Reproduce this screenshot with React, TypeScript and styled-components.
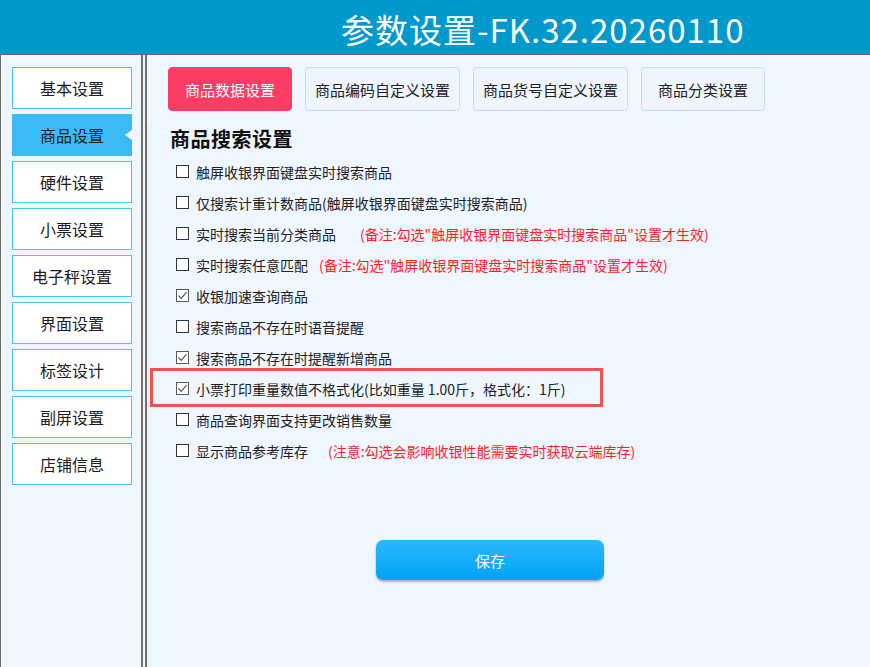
import React, { FC } from "react";
import styled, { createGlobalStyle, css } from "styled-components";

const GlobalStyle = createGlobalStyle`
  html, body {
    margin: 0;
    padding: 0;
    background: #eef6ff;
    font-family: "Noto Sans CJK SC", "Noto Sans", sans-serif;
  }
  * { box-sizing: border-box; }
`;

interface ActiveProps {
  active?: boolean;
}

interface NoteProps {
  gap: number;
}

const Page = styled.div`
  width: 870px;
  height: 667px;
  display: flex;
  flex-direction: column;
  overflow: hidden;
  background: #eef6ff;
`;

const Header = styled.div`
  height: 55px;
  flex-shrink: 0;
  background: #0099cc;
  border-bottom: 1px solid #6a6a6a;
  display: flex;
  align-items: center;
  padding: 3px 0 0 341px;
`;

const Title = styled.h1`
  margin: 0;
  font-size: 33px;
  font-weight: 400;
  color: #ffffff;
  letter-spacing: 1px;
`;

const Body = styled.div`
  flex: 1;
  display: flex;
`;

const Sidebar = styled.nav`
  width: 143px;
  border-left: 1px solid #6e6e6e;
  border-right: 2px solid #6e6e6e;
  padding: 12px 0 0 11px;
  display: flex;
  flex-direction: column;
  gap: 5px;
`;

const NavItem = styled.div<ActiveProps>`
  position: relative;
  width: 120px;
  height: 42px;
  display: flex;
  align-items: center;
  justify-content: center;
  font-size: 16px;
  color: #1d1d1d;
  background: #ffffff;
  border: 1px solid #4cc2f5;
  ${(p) =>
    p.active &&
    css`
      background: #3cbaf6;
      border-color: #3cbaf6;
      &::after {
        content: "";
        position: absolute;
        right: -1px;
        top: 50%;
        margin-top: -5px;
        border-top: 5px solid transparent;
        border-bottom: 5px solid transparent;
        border-right: 7px solid #ffffff;
      }
    `}
`;

const Content = styled.main`
  flex: 1;
  margin-left: 2px;
  border-left: 2px solid #6e6e6e;
  padding-top: 12px;
  display: flex;
  flex-direction: column;
`;

const TabBar = styled.div`
  display: flex;
  gap: 13px;
  padding-left: 21px;
`;

const Tab = styled.div<ActiveProps & { w: number }>`
  width: ${(p) => p.w}px;
  height: 44px;
  display: flex;
  align-items: center;
  justify-content: center;
  font-size: 15px;
  border-radius: 4px;
  color: #222222;
  background: #eef5ff;
  border: 1px solid #c8dcf7;
  ${(p) =>
    p.active &&
    css`
      color: #ffffff;
      background: #fb3c64;
      border-color: #fb3c64;
    `}
`;

const Section = styled.section`
  flex: 1;
  margin-top: 11px;
  border-left: 5px solid #f0f1f3;
  padding-left: 17px;
  display: flex;
  flex-direction: column;
`;

const Heading = styled.h2`
  margin: 3px 0 3px 1px;
  height: 28px;
  line-height: 28px;
  font-size: 20px;
  font-weight: 700;
  letter-spacing: 0.5px;
  color: #111111;
`;

const List = styled.div`
  display: flex;
  flex-direction: column;
  padding-left: 7px;
`;

const Row = styled.label`
  position: relative;
  height: 31px;
  display: flex;
  align-items: center;
  font-size: 14px;
  color: #222222;
`;

const Box = styled.span<{ checked?: boolean }>`
  width: 13px;
  height: 13px;
  flex-shrink: 0;
  background: #ffffff;
  border: 1px solid ${(p) => (p.checked ? "#5a5a5a" : "#333333")};
  display: flex;
  align-items: center;
  justify-content: center;
  margin-right: 7px;
`;

const Note = styled.span<NoteProps>`
  margin-left: ${(p) => p.gap}px;
  color: #ff1f1f;
  font-size: 14px;
`;

const Highlight = styled.span`
  position: absolute;
  left: -26px;
  top: -5px;
  width: 453px;
  height: 39px;
  border: 3px solid #f25252;
  pointer-events: none;
`;

const SaveButton = styled.button`
  margin: 74px 0 0 207px;
  width: 228px;
  height: 40px;
  border: none;
  border-radius: 7px;
  background: linear-gradient(#2cb8fe, #01a2f4);
  box-shadow: 0 2px 2px rgba(0, 0, 0, 0.28);
  color: #ffffff;
  font-family: inherit;
  font-size: 15px;
`;

const Check: FC = () => (
  <svg width="11" height="11" viewBox="0 0 11 11">
    <path d="M1.5 5.5 L4.3 8.3 L9.5 2.2" fill="none" stroke="#555" strokeWidth="1.2" />
  </svg>
);

const navItems = [
  "基本设置",
  "商品设置",
  "硬件设置",
  "小票设置",
  "电子秤设置",
  "界面设置",
  "标签设计",
  "副屏设置",
  "店铺信息",
];

const tabs = [
  { label: "商品数据设置", w: 124 },
  { label: "商品编码自定义设置", w: 155 },
  { label: "商品货号自定义设置", w: 155 },
  { label: "商品分类设置", w: 124 },
];

interface Option {
  label: string;
  checked?: boolean;
  note?: string;
  gap?: number;
  marked?: boolean;
}

const options: Option[] = [
  { label: "触屏收银界面键盘实时搜索商品" },
  { label: "仅搜索计重计数商品(触屏收银界面键盘实时搜索商品)" },
  {
    label: "实时搜索当前分类商品",
    note: '(备注:勾选"触屏收银界面键盘实时搜索商品"设置才生效)',
    gap: 24,
  },
  {
    label: "实时搜索任意匹配",
    note: '(备注:勾选"触屏收银界面键盘实时搜索商品"设置才生效)',
    gap: 11,
  },
  { label: "收银加速查询商品", checked: true },
  { label: "搜索商品不存在时语音提醒" },
  { label: "搜索商品不存在时提醒新增商品", checked: true },
  {
    label: "小票打印重量数值不格式化(比如重量 1.00斤，格式化：1斤)",
    checked: true,
    marked: true,
  },
  { label: "商品查询界面支持更改销售数量" },
  {
    label: "显示商品参考库存",
    note: "(注意:勾选会影响收银性能需要实时获取云端库存)",
    gap: 20,
  },
];

export default function App() {
  return (
    <Page>
      <GlobalStyle />
      <Header>
        <Title>参数设置-FK.32.20260110</Title>
      </Header>
      <Body>
        <Sidebar>
          {navItems.map((item) => (
            <NavItem key={item} active={item === "商品设置"}>
              {item}
            </NavItem>
          ))}
        </Sidebar>
        <Content>
          <TabBar>
            {tabs.map((t, i) => (
              <Tab key={t.label} w={t.w} active={i === 0}>
                {t.label}
              </Tab>
            ))}
          </TabBar>
          <Section>
            <Heading>商品搜索设置</Heading>
            <List>
              {options.map((o) => (
                <Row key={o.label}>
                  <Box checked={o.checked}>{o.checked && <Check />}</Box>
                  {o.label}
                  {o.note && <Note gap={o.gap || 0}>{o.note}</Note>}
                  {o.marked && <Highlight />}
                </Row>
              ))}
            </List>
            <SaveButton>保存</SaveButton>
          </Section>
        </Content>
      </Body>
    </Page>
  );
}
